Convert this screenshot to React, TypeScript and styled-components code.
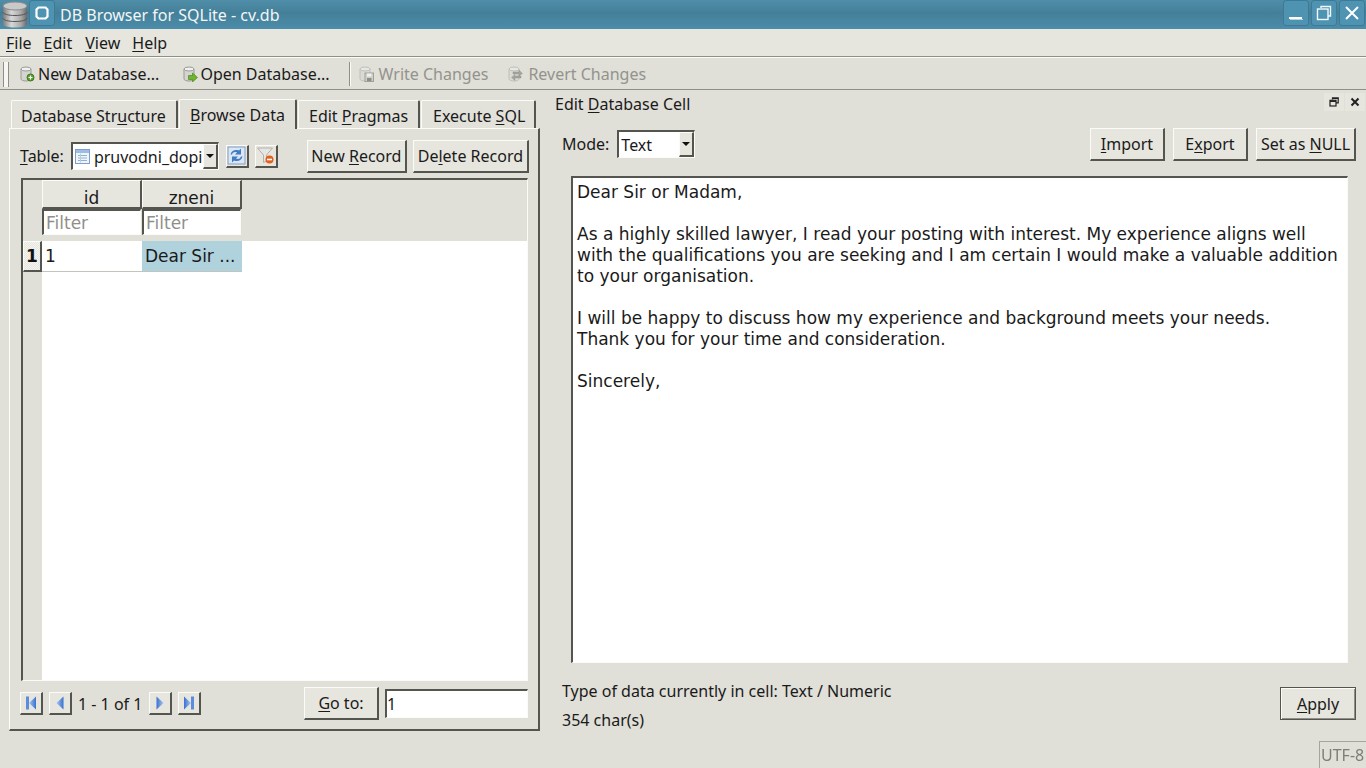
import React from "react";
import styled, { createGlobalStyle, css } from "styled-components";

const FACE = "#e0dfd8";
const BUTTON = "#e6e5de";
const DARK = "#55554f";
const CELL_FONT = `"DejaVu Sans", "Noto Sans", sans-serif`;

const GlobalStyle = createGlobalStyle`
  html, body { margin: 0; padding: 0; overflow: hidden; }
  body {
    background: ${FACE};
    color: #1a1a1a;
    font-family: "Noto Sans", "Open Sans", sans-serif;
    font-size: 16px;
  }
  u { text-underline-offset: 2px; text-decoration-thickness: 1px; }
`;

const raised = css`
  border-style: solid;
  border-width: 1px 2px 2px 1px;
  border-color: #fbfbf8 ${DARK} ${DARK} #fbfbf8;
`;

const sunken = css`
  border-style: solid;
  border-width: 2px 1px 1px 2px;
  border-color: ${DARK} #fbfbf8 #fbfbf8 ${DARK};
`;

const Window = styled.div`
  width: 1366px;
  height: 768px;
  display: flex;
  flex-direction: column;
  overflow: hidden;
`;

const TitleBar = styled.div`
  height: 29px;
  flex: none;
  display: flex;
  align-items: center;
  background: linear-gradient(#4f8ea9, #447f98 45%, #4b8dab);
  color: #f2f6f8;
`;

const AppIcon = styled.div`
  width: 29px;
  height: 29px;
  display: flex;
  align-items: center;
  justify-content: center;
`;

const TitleButton = styled.div`
  width: 26px;
  height: 26px;
  box-sizing: border-box;
  display: flex;
  align-items: center;
  justify-content: center;
  align-self: flex-start;
  background: #4e93b1;
  border: 1px solid #3d7a95;
  border-radius: 3px;
`;

const TitleText = styled.div`
  margin-left: 5px;
  flex: 1;
  white-space: nowrap;
`;

const TitleButtons = styled.div`
  display: flex;
  align-self: flex-start;
  gap: 2px;
  padding-right: 1px;
`;

const MenuBar = styled.div`
  height: 28px;
  flex: none;
  display: flex;
  align-items: center;
  gap: 12px;
  padding: 1px 0 0 6px;
  box-sizing: border-box;
  background: #e6e5de;
  border-bottom: 1px solid #8f8e88;
  box-shadow: 0 1px 0 #fbfbf8;
`;

const ToolBar = styled.div`
  height: 32px;
  flex: none;
  display: flex;
  align-items: center;
  box-sizing: border-box;
  margin-top: 1px;
  padding: 1px 0 0 3px;
  border-bottom: 1px solid #8f8e88;
`;

const Grip = styled.div`
  width: 4px;
  height: 25px;
  margin-right: 10px;
  border-left: 1px solid #8f8e88;
  border-right: 1px solid #8f8e88;
  background: #f6f6f2;
`;

const ToolItem = styled.div<{ $off?: boolean; $gap: number; $iconGap: number }>`
  display: flex;
  align-items: center;
  gap: ${(p) => p.$iconGap}px;
  margin-right: ${(p) => p.$gap}px;
  color: ${(p) => (p.$off ? "#93938d" : "#1a1a1a")};
  white-space: nowrap;
`;

const ToolSep = styled.div`
  width: 1px;
  height: 24px;
  margin-right: 8px;
  background: #8f8e88;
  box-shadow: 1px 0 0 #fbfbf8;
`;

const Main = styled.div`
  flex: 1;
  min-height: 0;
  display: flex;
`;

const LeftDock = styled.div`
  width: 531px;
  margin: 8px 0 0 9px;
  display: flex;
  flex-direction: column;
  height: 633px;
`;

const TabRow = styled.div`
  height: 30px;
  flex: none;
  display: flex;
  align-items: flex-end;
  padding-left: 2px;
  gap: 1px;
`;

const Tab = styled.div<{ $w: number; $pl: number; $active?: boolean }>`
  width: ${(p) => p.$w}px;
  height: ${(p) => (p.$active ? 30 : 28)}px;
  box-sizing: border-box;
  display: flex;
  align-items: center;
  padding: ${(p) => (p.$active ? 0 : 2)}px 0 0 ${(p) => p.$pl}px;
  border-top: 1px solid #fbfbf8;
  border-left: 1px solid #fbfbf8;
  border-right: 2px solid ${DARK};
  border-radius: 2px 2px 0 0;
  background: ${(p) => (p.$active ? FACE : "#e2e1da")};
  white-space: nowrap;
  margin-bottom: ${(p) => (p.$active ? -1 : 0)}px;
  position: relative;
  z-index: ${(p) => (p.$active ? 1 : 0)};
`;

const TabPane = styled.div`
  flex: 1;
  min-height: 0;
  box-sizing: border-box;
  ${raised}
  padding: 10px 9px 9px 10px;
  display: flex;
  flex-direction: column;
`;

const TableRow = styled.div`
  height: 34px;
  flex: none;
  display: flex;
  align-items: center;
`;

const Combo = styled.div<{ $w: number }>`
  width: ${(p) => p.$w}px;
  height: 28px;
  box-sizing: border-box;
  flex: none;
  display: flex;
  align-items: center;
  background: #fff;
  ${sunken}
  overflow: hidden;
  white-space: nowrap;
`;

const ComboText = styled.div`
  flex: 1;
  min-width: 0;
  overflow: hidden;
  display: flex;
  align-items: center;
  gap: 4px;
  padding-left: 2px;
`;

const ComboArrow = styled.div`
  width: 15px;
  align-self: stretch;
  flex: none;
  box-sizing: border-box;
  ${raised}
  background: ${BUTTON};
  display: flex;
  align-items: center;
  justify-content: center;
  &::after {
    content: "";
    border-left: 4px solid transparent;
    border-right: 4px solid transparent;
    border-top: 4px solid #111;
  }
`;

const Label = styled.div<{ $mr?: number }>`
  margin-right: ${(p) => p.$mr ?? 0}px;
  white-space: nowrap;
`;

const IconButton = styled.div<{ $ml: number }>`
  width: 23px;
  height: 23px;
  box-sizing: border-box;
  flex: none;
  margin-left: ${(p) => p.$ml}px;
  ${raised}
  background: ${BUTTON};
  display: flex;
  align-items: center;
  justify-content: center;
`;

const Button = styled.div<{ $w: number; $ml?: number }>`
  width: ${(p) => p.$w}px;
  height: 33px;
  box-sizing: border-box;
  flex: none;
  margin-left: ${(p) => p.$ml ?? 0}px;
  ${raised}
  background: ${BUTTON};
  display: flex;
  align-items: center;
  justify-content: center;
  white-space: nowrap;
`;

const Grid = styled.div`
  margin: 5px 1px 6px 1px;
  flex: 1;
  min-height: 0;
  box-sizing: border-box;
  ${sunken}
  background: #fff;
  display: flex;
  flex-direction: column;
  font-family: ${CELL_FONT};
  font-size: 17px;
`;

const GridHead = styled.div`
  height: 61px;
  flex: none;
  background: ${FACE};
  display: grid;
  grid-template-columns: 19px 100px 100px;
  grid-template-rows: 29px 26px;
`;

const HeadCorner = styled.div`
  grid-row: span 2;
`;

const HeadCell = styled.div`
  box-sizing: border-box;
  ${raised}
  padding-top: 8px;
  background: ${BUTTON};
  display: flex;
  align-items: center;
  justify-content: center;
`;

const FilterCell = styled.div`
  box-sizing: border-box;
  ${sunken}
  background: #fff;
  color: #8f8f8a;
  margin: 0 1px 0 0;
  display: flex;
  align-items: center;
  padding-left: 2px;
`;

const GridBody = styled.div`
  flex: 1;
  min-height: 0;
  display: flex;
`;

const RowGutter = styled.div`
  width: 19px;
  flex: none;
  background: ${FACE};
`;

const RowNumber = styled.div`
  height: 31px;
  box-sizing: border-box;
  ${raised}
  background: repeating-conic-gradient(#e6e5de 0 25%, #f4f4f0 0 50%) 0 0 / 2px 2px;
  font-weight: 700;
  color: #111;
  display: flex;
  align-items: center;
  justify-content: center;
`;

const DataCell = styled.div<{ $selected?: boolean }>`
  width: 100px;
  height: 31px;
  box-sizing: border-box;
  padding-left: 3px;
  display: flex;
  align-items: center;
  border-bottom: 1px solid #c4c4be;
  background: ${(p) => (p.$selected ? "#b0d2dc" : "#fff")};
  white-space: nowrap;
  overflow: hidden;
`;

const Pager = styled.div`
  height: 33px;
  flex: none;
  display: flex;
  align-items: center;
`;

const PagerText = styled.div`
  margin: 0 7px 0 6px;
  white-space: nowrap;
`;

const LineEdit = styled.div`
  width: 143px;
  height: 29px;
  box-sizing: border-box;
  margin: 0 1px 0 6px;
  ${sunken}
  background: #fff;
  display: flex;
  align-items: center;
`;

const RightDock = styled.div`
  flex: 1;
  min-width: 0;
  margin-left: 15px;
  display: flex;
  flex-direction: column;
`;

const DockTitle = styled.div`
  height: 28px;
  flex: none;
  display: flex;
  align-items: center;
  justify-content: space-between;
  padding-right: 1px;
`;

const DockButtons = styled.div`
  display: flex;
  gap: 1px;
  margin-top: -4px;
`;

const DockButton = styled.div`
  width: 20px;
  height: 18px;
  display: flex;
  align-items: center;
  justify-content: center;
  background: #e6e5de;
`;

const ModeRow = styled.div`
  height: 42px;
  flex: none;
  display: flex;
  align-items: center;
  padding: 0 10px 0 7px;
  margin-top: 5px;
`;

const Spacer = styled.div`
  flex: 1;
`;

const TextArea = styled.div`
  height: 487px;
  flex: none;
  margin: 11px 18px 0 16px;
  box-sizing: border-box;
  ${sunken}
  background: #fff;
  padding: 4px 3px 4px 4px;
  font-family: ${CELL_FONT};
  font-size: 17px;
`;

const TextLine = styled.div`
  height: 21px;
  line-height: 21px;
  white-space: nowrap;
`;

const InfoRow = styled.div`
  display: flex;
  padding: 0 10px 0 7px;
  margin-top: 17px;
`;

const InfoText = styled.div`
  display: flex;
  flex-direction: column;
  gap: 7px;
  flex: 1;
`;

const InfoLine = styled.div`
  height: 22px;
  line-height: 22px;
`;

const ApplyButton = styled(Button)`
  margin-top: 7px;
  border: 1px solid ${DARK};
  box-shadow: inset 1px 1px 0 #fbfbf8, inset -1px -1px 0 #8f8e88;
`;

const StatusBar = styled.div`
  height: 27px;
  flex: none;
  position: fixed;
  right: 0;
  bottom: 0;
  width: 47px;
  box-sizing: border-box;
  border: 1px solid #a5a5a0;
  border-right: 0;
  border-bottom: 0;
  color: #7e7e79;
  display: flex;
  align-items: center;
  padding-left: 1px;
  overflow: hidden;
  white-space: nowrap;
`;

const DbIcon = () => (
  <svg width="28" height="27" viewBox="0 0 28 27">
    <defs>
      <linearGradient id="dbg" x1="0" x2="1" y1="0" y2="0">
        <stop offset="0" stopColor="#7c7c7c" />
        <stop offset="0.35" stopColor="#d8d8d8" />
        <stop offset="0.75" stopColor="#a8a8a8" />
        <stop offset="1" stopColor="#6a6a6a" />
      </linearGradient>
    </defs>
    <path d="M2 5v18c0 2 5 3.500 12 3.500s12-1.500 12-3.500V5z" fill="url(#dbg)" />
    <ellipse cx="14" cy="5" rx="12" ry="4" fill="#c9c9c9" stroke="#8a8a8a" />
    <path d="M2 11c0 2 5 3.500 12 3.500S26 13 26 11M2 17c0 2 5 3.500 12 3.500S26 19 26 17" fill="none" stroke="#555" />
  </svg>
);

const SmallDb = ({ faded }: { faded?: boolean }) => (
  <g opacity={faded ? 0.45 : 1}>
    <path d="M2 3v10c0 1 2 2 5 2s5-1 5-2V3z" fill="#d4d4d0" stroke="#9a9a96" />
    <ellipse cx="7" cy="3" rx="5" ry="2" fill="#f0f0ec" stroke="#9a9a96" />
  </g>
);

const NewDbIcon = () => (
  <svg width="16" height="16" viewBox="0 0 16 16">
    <SmallDb />
    <circle cx="11.500" cy="11.500" r="3.500" fill="#5aa02c" stroke="#3f7a1c" />
    <path d="M11.500 9.500v4M9.500 11.500h4" stroke="#fff" strokeWidth="1.200" />
  </svg>
);

const OpenDbIcon = () => (
  <svg width="16" height="16" viewBox="0 0 16 16">
    <SmallDb />
    <path d="M6.500 9.500h4V7l5 4.500-5 4.500v-2.500h-4z" fill="#6fb52f" stroke="#4a8a1c" strokeWidth="0.700" />
  </svg>
);

const WriteIcon = () => (
  <svg width="16" height="16" viewBox="0 0 16 16">
    <SmallDb faded />
    <rect x="7" y="7" width="8.500" height="8.500" fill="#cfcfca" stroke="#a0a09b" />
    <rect x="9" y="7.500" width="4.500" height="3" fill="#f0f0ec" />
    <rect x="9" y="12" width="4.500" height="3" fill="#8f8f8a" />
  </svg>
);

const RevertIcon = () => (
  <svg width="16" height="16" viewBox="0 0 16 16">
    <SmallDb faded />
    <path d="M6 6h6V4l3.500 3.500L12 10V8H6zM14 10H8V8.500L4.500 11.500 8 14.500V12h6z" fill="#a5a5a0" stroke="#8f8f8a" strokeWidth="0.400" />
  </svg>
);

const TableIcon = () => (
  <svg width="15" height="15" viewBox="0 0 15 15" style={{ flex: "none" }}>
    <rect x="0.500" y="0.500" width="14" height="14" fill="#f0f5fc" stroke="#7d9fd0" />
    <rect x="1" y="1" width="13" height="3" fill="#9dbce6" />
    <path d="M3 6.500h9M3 9h9M3 11.500h9" stroke="#8fb4c8" />
    <path d="M5.500 4.500v9" stroke="#b7cde8" />
  </svg>
);

const RefreshIcon = () => (
  <svg width="19" height="19" viewBox="0 0 19 19">
    <rect x="1" y="1" width="17" height="17" fill="#dbe7f4" stroke="#7f9fc6" />
    <path d="M3.500 8.500C4 5 8 3 12 4.500l2-2v6h-6l2-2c-2-1-4-.5-5 2z" fill="#3f7cc4" />
    <path d="M15.500 10.500C15 14 11 16 7 14.500l-2 2v-6h6l-2 2c2 1 4 .5 5-2z" fill="#3f7cc4" />
  </svg>
);

const FilterIcon = () => (
  <svg width="19" height="19" viewBox="0 0 19 19">
    <path d="M1.500 2h15l-6 7v6l-3 1.500V9z" fill="#e6e6e2" stroke="#b2b2ac" />
    <circle cx="13.500" cy="13.500" r="4" fill="#e2601a" />
    <rect x="11" y="12.700" width="5" height="1.600" fill="#fff" />
  </svg>
);

const NavIcon = ({ dir, bar }: { dir: "left" | "right"; bar?: boolean }) => (
  <svg width="16" height="16" viewBox="0 0 16 16" style={{ transform: dir === "right" ? "scaleX(-1)" : undefined }}>
    <defs>
      <linearGradient id="nav" x1="0" x2="1" y1="0" y2="0">
        <stop offset="0" stopColor="#a9c6f0" />
        <stop offset="1" stopColor="#3a70d0" />
      </linearGradient>
    </defs>
    {bar && <rect x="3" y="1.500" width="3" height="13" fill="#5a8edc" />}
    <path d={bar ? "M13 1.500v13L6 8z" : "M11.500 1.500v13L4.500 8z"} fill="url(#nav)" />
  </svg>
);

const MinimizeGlyph = () => (
  <svg width="16" height="16" viewBox="0 0 16 16">
    <rect x="1" y="12" width="13" height="2" fill="#fff" />
    <rect x="2" y="14" width="13" height="1" fill="#b8d2de" />
  </svg>
);

const MaximizeGlyph = () => (
  <svg width="16" height="16" viewBox="0 0 16 16" fill="none" stroke="#f4f8fa" strokeWidth="1.400">
    <path d="M5 3V1.500h9.500V11H12" />
    <rect x="1.500" y="4" width="10.500" height="10.500" />
  </svg>
);

const CloseGlyph = () => (
  <svg width="16" height="16" viewBox="0 0 16 16" stroke="#fff" strokeWidth="2">
    <path d="M2 2l12 12M14 2L2 14" />
  </svg>
);

const AppRestoreGlyph = () => (
  <svg width="16" height="16" viewBox="0 0 16 16" fill="none" stroke="#fff" strokeWidth="2.200">
    <path d="M4.500 2.500h7l2 2v7l-2 2h-7l-2-2v-7z" />
  </svg>
);

const DockFloatGlyph = () => (
  <svg width="10" height="10" viewBox="0 0 10 10" fill="none" stroke="#222" strokeWidth="1.200">
    <path d="M3.500 2.500V.8h5.700v5H7" />
    <rect x="1" y="3.300" width="6" height="5.700" />
    <path d="M1 4.300h6M3.500 1.500h5.700" />
  </svg>
);

const DockCloseGlyph = () => (
  <svg width="10" height="10" viewBox="0 0 10 10" stroke="#222" strokeWidth="2">
    <path d="M1.500 1.500l7 7M8.500 1.500l-7 7" />
  </svg>
);

const LETTER = [
  "Dear Sir or Madam,",
  "",
  "As a highly skilled lawyer, I read your posting with interest. My experience aligns well",
  "with the qualifications you are seeking and I am certain I would make a valuable addition",
  "to your organisation.",
  "",
  "I will be happy to discuss how my experience and background meets your needs.",
  "Thank you for your time and consideration.",
  "",
  "Sincerely,",
];

export default function App() {
  return (
    <Window>
      <GlobalStyle />
      <TitleBar>
        <AppIcon>
          <DbIcon />
        </AppIcon>
        <TitleButton>
          <AppRestoreGlyph />
        </TitleButton>
        <TitleText>DB Browser for SQLite - cv.db</TitleText>
        <TitleButtons>
          <TitleButton>
            <MinimizeGlyph />
          </TitleButton>
          <TitleButton>
            <MaximizeGlyph />
          </TitleButton>
          <TitleButton>
            <CloseGlyph />
          </TitleButton>
        </TitleButtons>
      </TitleBar>

      <MenuBar>
        <Label><u>F</u>ile</Label>
        <Label $mr={1}><u>E</u>dit</Label>
        <Label><u>V</u>iew</Label>
        <Label><u>H</u>elp</Label>
      </MenuBar>

      <ToolBar>
        <Grip />
        <ToolItem $gap={23} $iconGap={3}><NewDbIcon />New Database...</ToolItem>
        <ToolItem $gap={19} $iconGap={2}><OpenDbIcon />Open Database...</ToolItem>
        <ToolSep />
        <ToolItem $off $gap={19} $iconGap={5}><WriteIcon />Write Changes</ToolItem>
        <ToolItem $off $gap={0} $iconGap={5}><RevertIcon />Revert Changes</ToolItem>
      </ToolBar>

      <Main>
        <LeftDock>
          <TabRow>
            <Tab $w={167} $pl={9}><span>Database Str<u>u</u>cture</span></Tab>
            <Tab $w={118} $pl={10} $active><span><u>B</u>rowse Data</span></Tab>
            <Tab $w={122} $pl={10}><span>Edit <u>P</u>ragmas</span></Tab>
            <Tab $w={115} $pl={11}><span>Execute <u>S</u>QL</span></Tab>
          </TabRow>
          <TabPane>
            <TableRow>
              <Label $mr={7}><u>T</u>able:</Label>
              <Combo $w={148}>
                <ComboText><TableIcon />pruvodni_dopisy</ComboText>
                <ComboArrow />
              </Combo>
              <IconButton $ml={7}><RefreshIcon /></IconButton>
              <IconButton $ml={6}><FilterIcon /></IconButton>
              <Button $w={100} $ml={29}><span>New <u>R</u>ecord</span></Button>
              <Button $w={116} $ml={6}><span>De<u>l</u>ete Record</span></Button>
            </TableRow>
            <Grid>
              <GridHead>
                <HeadCorner />
                <HeadCell>id</HeadCell>
                <HeadCell>zneni</HeadCell>
                <FilterCell>Filter</FilterCell>
                <FilterCell>Filter</FilterCell>
              </GridHead>
              <GridBody>
                <RowGutter>
                  <RowNumber>1</RowNumber>
                </RowGutter>
                <DataCell>1</DataCell>
                <DataCell $selected>Dear Sir ...</DataCell>
              </GridBody>
            </Grid>
            <Pager>
              <IconButton $ml={0}><NavIcon dir="left" bar /></IconButton>
              <IconButton $ml={6}><NavIcon dir="left" /></IconButton>
              <PagerText>1 - 1 of 1</PagerText>
              <IconButton $ml={0}><NavIcon dir="right" /></IconButton>
              <IconButton $ml={6}><NavIcon dir="right" bar /></IconButton>
              <Spacer />
              <Button $w={75}><span><u>G</u>o to:</span></Button>
              <LineEdit>1</LineEdit>
            </Pager>
          </TabPane>
        </LeftDock>

        <RightDock>
          <DockTitle>
            <span>Edit <u>D</u>atabase Cell</span>
            <DockButtons>
              <DockButton><DockFloatGlyph /></DockButton>
              <DockButton><DockCloseGlyph /></DockButton>
            </DockButtons>
          </DockTitle>
          <ModeRow>
            <Label $mr={8}>Mode:</Label>
            <Combo $w={78}>
              <ComboText>Text</ComboText>
              <ComboArrow />
            </Combo>
            <Spacer />
            <Button $w={75}><span><u>I</u>mport</span></Button>
            <Button $w={75} $ml={8}><span>E<u>x</u>port</span></Button>
            <Button $w={100} $ml={8}><span>Set as <u>N</u>ULL</span></Button>
          </ModeRow>
          <TextArea>
            {LETTER.map((line, i) => (
              <TextLine key={i}>{line}</TextLine>
            ))}
          </TextArea>
          <InfoRow>
            <InfoText>
              <InfoLine>Type of data currently in cell: Text / Numeric</InfoLine>
              <InfoLine>354 char(s)</InfoLine>
            </InfoText>
            <ApplyButton $w={76}><span><u>A</u>pply</span></ApplyButton>
          </InfoRow>
        </RightDock>
      </Main>
      <StatusBar>UTF-8</StatusBar>
    </Window>
  );
}
